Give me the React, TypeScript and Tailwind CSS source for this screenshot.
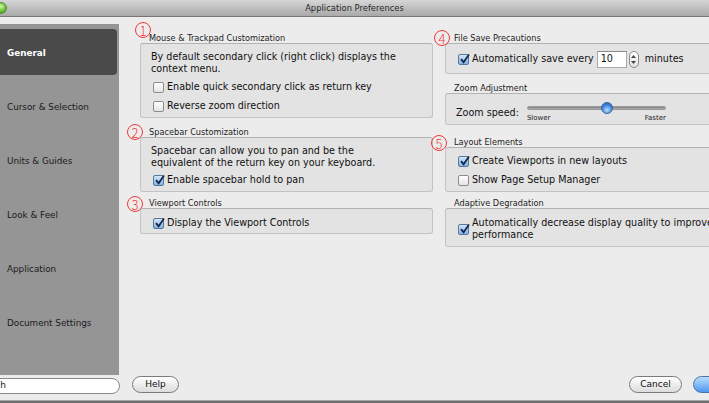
import React from "react"

const sidebarItems = ["General", "Cursor & Selection", "Units & Guides", "Look & Feel", "Application", "Document Settings"]

function CheckBox({ checked = false }: { checked?: boolean }) {
  return (
    <span
      className={
        checked
          ? "relative shrink-0 w-[11px] h-[11px] rounded-[2px] border border-[#55789f] bg-gradient-to-b from-[#d4e6f8] to-[#86b2e2]"
          : "relative shrink-0 w-[11px] h-[11px] rounded-[2px] border border-[#8c8c8c] bg-gradient-to-b from-white to-[#e4e4e4]"
      }
    >
      {checked && (
        <svg className="absolute left-[0px] top-[-2px]" width="12" height="12" viewBox="0 0 12 12">
          <path d="M2 6.2 L4.6 9.2 L10 1.6" fill="none" stroke="#13294b" strokeWidth="1.8" />
        </svg>
      )}
    </span>
  )
}

function CheckRow({ label, checked }: { label: string; checked?: boolean }) {
  return (
    <div className="flex items-center h-[19px] pl-[12px]">
      <CheckBox checked={checked} />
      <span className="ml-[3px] whitespace-nowrap">{label}</span>
    </div>
  )
}

function Group({ title, className, children }: { title: string; className: string; children: React.ReactNode }) {
  return (
    <div className={className}>
      <div className="h-[12px] leading-[14px] text-[8.2px] text-[#1c1c1c] pl-[9px] whitespace-nowrap">{title}</div>
      {children}
    </div>
  )
}

const box = "rounded-[3px] border border-[#c3c3c3] border-t-[#b2b2b2] bg-[#e3e3e3]"

function Mark({ n, className }: { n: string; className: string }) {
  return (
    <span
      className={
        "absolute w-[16px] h-[16px] rounded-full border border-[#f0393b] text-[#f0393b] text-[13px] leading-none flex items-center justify-center font-['Noto_Sans_CJK_JP',sans-serif] font-light " +
        className
      }
    >
      {n}
    </span>
  )
}

export default function App() {
  return (
    <div className="relative w-[709px] h-[403px] overflow-hidden bg-[#ececec] flex flex-col font-['DejaVu_Sans','Liberation_Sans',sans-serif] text-[9.6px] text-[#111]">
      {/* title bar */}
      <div className="h-[17px] shrink-0 flex items-center bg-gradient-to-b from-[#d6d6d6] to-[#a9a9a9] border-b border-[#767676]">
        <span className="-ml-[5px] w-[12px] h-[12px] rounded-full border border-[#5a8a3a] bg-[radial-gradient(circle_at_50%_35%,#d4f7a8,#5cbc2c_60%,#3f8a1c)]" />
        <span className="flex-1 text-center text-[8.4px] text-[#262626] -ml-[7px]">Application Preferences</span>
      </div>

      <div className="flex-1 flex min-h-0">
        {/* sidebar */}
        <div className="w-[121px] shrink-0 flex flex-col pt-[7px]">
          <div className="w-[119px] h-[351px] bg-[#959595] pt-[1px]">
            {sidebarItems.map((item, i) => (
              <div key={item} className="h-[54px] py-[4px] pr-[2px]">
                <div
                  className={
                    i === 0
                      ? "h-full flex items-center pl-[7px] pt-[4px] rounded-r-[4px] bg-[#4a4a4a] text-white font-bold text-[8.8px]"
                      : "h-full flex items-center pl-[7px] pt-[4px] text-[#1b1b1b] text-[8.8px]"
                  }
                >
                  {item}
                </div>
              </div>
            ))}
          </div>
          <div className="mt-[3px] h-[16px] w-[154px] -ml-[34px] rounded-full border border-[#8a8a8a] bg-white flex items-center pl-[8px] text-[9px] text-[#222]">
            Search
          </div>
        </div>

        {/* content */}
        <div className="flex-1 flex flex-col pt-[14px] pb-[7px] min-w-0">
          <div className="flex ml-[19px] gap-[12px]">
            {/* left column */}
            <div className="w-[293px] shrink-0 flex flex-col">
              <Group title="Mouse & Trackpad Customization" className="">
                <div className={box + " h-[75px] pt-[7px]"}>
                  <p className="pl-[10px] leading-[12px]">
                    By default secondary click (right click) displays the
                    <br />
                    context menu.
                  </p>
                  <div className="mt-[3px]">
                    <CheckRow label="Enable quick secondary click as return key" />
                    <CheckRow label="Reverse zoom direction" />
                  </div>
                </div>
              </Group>
              <Group title="Spacebar Customization" className="mt-[7px]">
                <div className={box + " h-[55px] pt-[7px]"}>
                  <p className="pl-[10px] leading-[12px]">
                    Spacebar can allow you to pan and be the
                    <br />
                    equivalent of the return key on your keyboard.
                  </p>
                  <div className="mt-[2px]">
                    <CheckRow label="Enable spacebar hold to pan" checked />
                  </div>
                </div>
              </Group>
              <Group title="Viewport Controls" className="mt-[4px]">
                <div className={box + " h-[26px] flex items-center pt-[5px]"}>
                  <CheckRow label="Display the Viewport Controls" checked />
                </div>
              </Group>
            </div>

            {/* right column */}
            <div className="w-[300px] shrink-0 flex flex-col">
              <Group title="File Save Precautions" className="">
                <div className={box + " h-[31px] flex items-center pl-[12px] pt-[2px]"}>
                  <CheckBox checked />
                  <span className="ml-[3px] whitespace-nowrap">Automatically save every</span>
                  <span className="ml-[3px] w-[30px] h-[17px] shrink-0 bg-white border border-[#a8a8a8] border-t-[#8a8a8a] flex items-center pl-[3px]">
                    10
                  </span>
                  <span className="ml-[2px] w-[10px] h-[17px] shrink-0 rounded-full border border-[#8c8c8c] bg-gradient-to-b from-white to-[#e2e2e2] flex flex-col items-center justify-center gap-[3px]">
                    <svg width="5" height="3" viewBox="0 0 5 3">
                      <path d="M0 3 L2.5 0 L5 3 Z" fill="#444" />
                    </svg>
                    <svg width="5" height="3" viewBox="0 0 5 3">
                      <path d="M0 0 L2.5 3 L5 0 Z" fill="#444" />
                    </svg>
                  </span>
                  <span className="ml-[6px] whitespace-nowrap">minutes</span>
                </div>
              </Group>
              <Group title="Zoom Adjustment" className="mt-[7px]">
                <div className={box + " h-[32px] flex items-start pt-[8px] pl-[10px]"}>
                  <span className="mt-[4.5px] leading-[12px] whitespace-nowrap">Zoom speed:</span>
                  <div className="ml-[8px] w-[139px] flex flex-col">
                    <div className="relative h-[12px] flex items-center">
                      <div className="w-full h-[4px] rounded-full bg-gradient-to-b from-[#7c7c7c] to-[#b4b4b4] border border-[#9a9a9a]" />
                      <span className="absolute left-[74px] top-0 w-[12px] h-[12px] rounded-full border border-[#3b64a0] bg-[radial-gradient(circle_at_50%_70%,#bfe0ff,#3f86e0_55%,#1d4f9e)]" />
                    </div>
                    <div className="flex justify-between text-[7px] leading-[8px] text-[#222]">
                      <span>Slower</span>
                      <span>Faster</span>
                    </div>
                  </div>
                </div>
              </Group>
              <Group title="Layout Elements" className="mt-[10px]">
                <div className={box + " h-[45px] pt-[4px]"}>
                  <CheckRow label="Create Viewports in new layouts" checked />
                  <CheckRow label="Show Page Setup Manager" />
                </div>
              </Group>
              <Group title="Adaptive Degradation" className="mt-[4px]">
                <div className={box + " h-[39px] flex items-center pl-[12px] pt-[3px]"}>
                  <CheckBox checked />
                  <span className="ml-[3px] leading-[12.3px] whitespace-nowrap">
                    Automatically decrease display quality to improve
                    <br />
                    performance
                  </span>
                </div>
              </Group>
            </div>
          </div>

          {/* buttons */}
          <div className="mt-auto flex items-center pl-[11px]">
            <button className="w-[47px] h-[17px] shrink-0 rounded-full border border-[#7a7a7a] bg-gradient-to-b from-white to-[#dcdcdc] text-[9px] text-[#111]">
              Help
            </button>
            <button className="ml-[450px] w-[53px] h-[17px] shrink-0 rounded-full border border-[#7a7a7a] bg-gradient-to-b from-white to-[#dcdcdc] text-[9px] text-[#111]">
              Cancel
            </button>
            <button className="ml-[11px] w-[60px] h-[17px] shrink-0 rounded-full border border-[#4b72a8] bg-gradient-to-b from-[#b9dcfc] to-[#4d9aee] text-[9px] text-[#111]">
              OK
            </button>
          </div>
        </div>
      </div>
      <div className="h-[3px] shrink-0 bg-[#6f6f6f] border-t border-[#a5a5a5]" />

      {/* annotations */}
      <Mark n="1" className="left-[135px] top-[22px]" />
      <Mark n="2" className="left-[127px] top-[124px]" />
      <Mark n="3" className="left-[127px] top-[196px]" />
      <Mark n="4" className="left-[434px] top-[30px]" />
      <Mark n="5" className="left-[431px] top-[135px]" />
    </div>
  )
}
